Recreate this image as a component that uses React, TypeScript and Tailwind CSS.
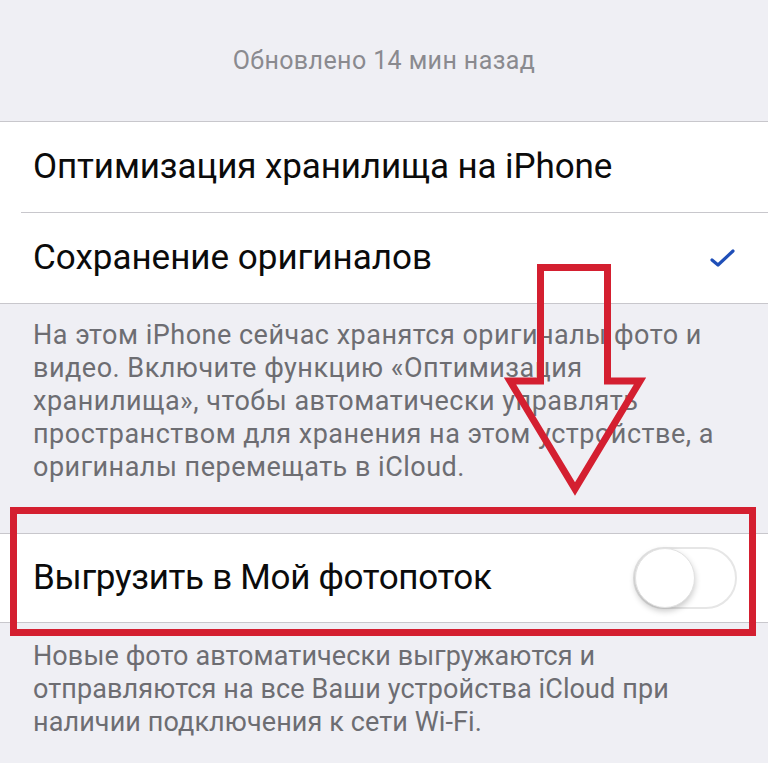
import React from "react";

const font = { fontFamily: "Roboto, 'Liberation Sans', sans-serif" };

export default function App() {
  return (
    <div
      className="relative w-[768px] h-[763px] overflow-hidden bg-[#efeff4]"
      style={font}
    >
      <div className="h-[121px] flex items-center justify-center text-[25px] text-[#8a8a8f] tracking-[0.4px]">
        Обновлено 14 мин назад
      </div>

      <div className="bg-white border-t border-b border-[#c8c7cc]">
        <div className="h-[90px] flex items-center pl-[33px] text-[35px] text-[#0b0b0b] tracking-[-0.1px]">
          Оптимизация хранилища на iPhone
        </div>
        <div className="ml-[21px] h-px bg-[#c8c7cc]" />
        <div className="h-[90px] flex items-center justify-between pl-[33px] pr-[32px] text-[35px] text-[#0b0b0b] tracking-[0px]">
          <span>Сохранение оригиналов</span>
          <svg width="26" height="22" viewBox="0 0 26 22">
            <polyline
              points="2,13 8,18 23,4"
              fill="none"
              stroke="#1f4fb8"
              strokeWidth="3.2"
              strokeLinecap="round"
              strokeLinejoin="round"
            />
          </svg>
        </div>
      </div>

      <div className="pl-[33px] pt-[15px] text-[27px] leading-[33px] text-[#6d6d72] tracking-[0.5px]">
        <div className="whitespace-nowrap">На этом iPhone сейчас хранятся оригиналы фото и</div>
        <div className="whitespace-nowrap">видео. Включите функцию «Оптимизация</div>
        <div className="whitespace-nowrap">хранилища», чтобы автоматически управлять</div>
        <div className="whitespace-nowrap">пространством для хранения на этом устройстве, а</div>
        <div className="whitespace-nowrap">оригиналы перемещать в iCloud.</div>
      </div>

      <div className="mt-[49px] bg-white border-t border-b border-[#c8c7cc]">
        <div className="h-[88px] flex items-center justify-between pl-[33px] pr-[31px] text-[35px] text-[#0b0b0b] tracking-[-0.3px]">
          <span>Выгрузить в Мой фотопоток</span>
          <div className="relative w-[104px] h-[62px] rounded-full border-[2px] border-[#e6e6e6] bg-white">
            <div className="absolute left-0 top-[-1px] w-[60px] h-[60px] rounded-full bg-white border border-[#e2e2e2] shadow-[0_3px_6px_rgba(0,0,0,0.22)]" />
          </div>
        </div>
      </div>

      <div className="pl-[33px] pt-[17px] text-[27px] leading-[33px] text-[#6d6d72] tracking-[0.1px]">
        <div className="whitespace-nowrap">Новые фото автоматически выгружаются и</div>
        <div className="whitespace-nowrap">отправляются на все Ваши устройства iCloud при</div>
        <div className="whitespace-nowrap">наличии подключения к сети Wi-Fi.</div>
      </div>

      <div className="absolute left-[10px] top-[507px] w-[746px] h-[129px] border-[7px] border-[#d41f30]" />

      <svg
        className="absolute left-0 top-0 pointer-events-none"
        width="768"
        height="763"
        viewBox="0 0 768 763"
      >
        <polygon
          points="540.5,267.5 607.5,267.5 607.5,381 640,381 575,489 510,381 540.5,381"
          fill="none"
          stroke="#d41f30"
          strokeWidth="7"
          strokeLinejoin="miter"
        />
      </svg>
    </div>
  );
}
